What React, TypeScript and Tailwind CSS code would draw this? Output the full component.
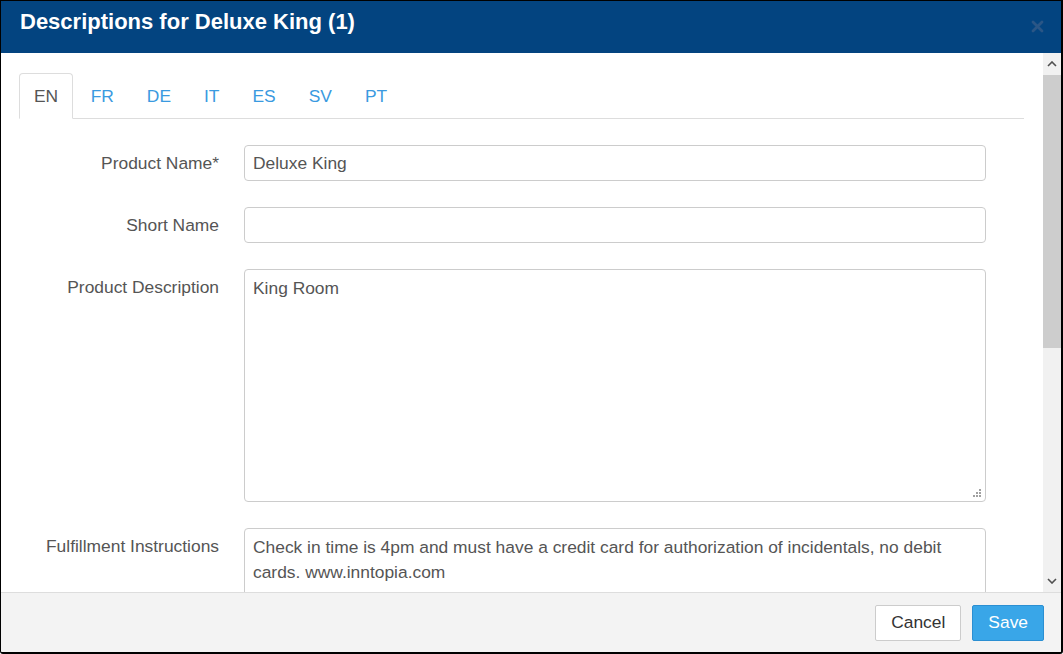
import React from "react";

const tabs = ["EN", "FR", "DE", "IT", "ES", "SV", "PT"];

function Field({ label, children }: { label: string; children: React.ReactNode }) {
  return (
    <div className="flex gap-[25px]">
      <div className="w-[200px] shrink-0 pt-[8px] text-right leading-[20px] text-[#555]">{label}</div>
      <div className="w-[742px] shrink-0">{children}</div>
    </div>
  );
}

function Grip() {
  return (
    <svg className="absolute bottom-[3px] right-[3px]" width="10" height="10" viewBox="0 0 10 10">
      <g fill="#a0a0a0">
        <rect x="7" y="1" width="2" height="2" />
        <rect x="4" y="4" width="2" height="2" />
        <rect x="7" y="4" width="2" height="2" />
        <rect x="1" y="7" width="2" height="2" />
        <rect x="4" y="7" width="2" height="2" />
        <rect x="7" y="7" width="2" height="2" />
      </g>
    </svg>
  );
}

export default function App() {
  return (
    <div
      className="flex h-[654px] w-[1063px] flex-col overflow-hidden rounded-b-[3px] border border-r-2 border-b-2 border-black bg-white text-[17.4px] text-[#555]"
      style={{ fontFamily: '"Liberation Sans", Arial, sans-serif' }}
    >
      <header className="flex h-[52px] shrink-0 items-start justify-between bg-[#034480] pl-[19px] pr-[17px] pt-[9px]">
        <h2 className="text-[22px] font-bold leading-[24px] text-white">Descriptions for Deluxe King (1)</h2>
        <svg className="mt-[10px]" width="13" height="13" viewBox="0 0 13 13">
          <path d="M2 2 L11 11 M11 2 L2 11" stroke="#2a5686" strokeWidth="2.8" strokeLinecap="round" />
        </svg>
      </header>

      <div className="flex min-h-0 flex-1">
        <div className="flex-1 overflow-hidden pl-[18px] pr-[19px] pt-[20px]">
          <nav className="flex gap-[2px] border-b border-[#ddd]">
            {tabs.map((t, i) => (
              <div
                key={t}
                className={
                  i === 0
                    ? "-mb-px h-[46px] rounded-t-[4px] border border-[#ddd] border-b-white bg-white px-[14px] leading-[44px] text-[#555]"
                    : "-mb-px h-[46px] border border-transparent px-[14.5px] leading-[44px] text-[#3a9ae0]"
                }
              >
                {t}
              </div>
            ))}
          </nav>

          <div className="flex flex-col gap-[26px] pt-[26px]">
            <Field label="Product Name*">
              <div className="h-[36px] rounded-[4px] border border-[#ccc] px-[8px] leading-[34px]">Deluxe King</div>
            </Field>
            <Field label="Short Name">
              <div className="h-[36px] rounded-[4px] border border-[#ccc]" />
            </Field>
            <Field label="Product Description">
              <div className="relative h-[233px] rounded-[4px] border border-[#ccc] px-[8px] py-[6px] leading-[25px]">
                King Room
                <Grip />
              </div>
            </Field>
            <Field label="Fulfillment Instructions">
              <div className="relative h-[120px] rounded-[4px] border border-[#ccc] px-[8px] py-[6px] leading-[25px]">
                Check in time is 4pm and must have a credit card for authorization of incidentals, no debit cards.
                www.inntopia.com
              </div>
            </Field>
          </div>
        </div>

        <div className="flex w-[18px] shrink-0 flex-col bg-[#f1f1f1]">
          <div className="flex h-[22px] items-center justify-center">
            <svg width="10" height="6" viewBox="0 0 10 6">
              <path d="M1 5 L5 1 L9 5" fill="none" stroke="#505050" strokeWidth="1.6" />
            </svg>
          </div>
          <div className="h-[273px] bg-[#cdcdcd]" />
          <div className="flex-1" />
          <div className="flex h-[22px] items-center justify-center">
            <svg width="10" height="6" viewBox="0 0 10 6">
              <path d="M1 1 L5 5 L9 1" fill="none" stroke="#505050" strokeWidth="1.6" />
            </svg>
          </div>
        </div>
      </div>

      <footer className="flex h-[60px] shrink-0 items-center justify-end gap-[11px] border-t border-[#ddd] bg-[#f3f3f3] pr-[17px]">
        <button className="h-[36px] rounded-[2px] border border-[#ccc] bg-white px-[15px] text-[#333]">
          Cancel
        </button>
        <button className="h-[36px] rounded-[2px] border border-[#2b8fd2] bg-[#39a6e8] px-[15px] text-white">
          Save
        </button>
      </footer>
    </div>
  );
}
